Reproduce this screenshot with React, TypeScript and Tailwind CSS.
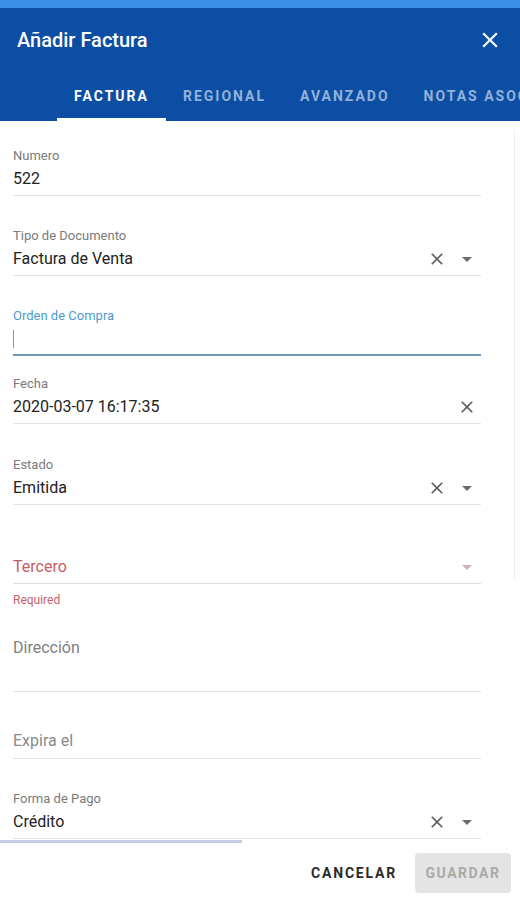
import React from "react";

function CloseIcon({ size = 20, color = "#5f5f5f" }: { size?: number; color?: string }) {
  return (
    <svg width={size} height={size} viewBox="0 0 24 24" fill={color}>
      <path d="M19 6.41L17.59 5 12 10.59 6.41 5 5 6.41 10.59 12 5 17.59 6.41 19 12 13.41 17.59 19 19 17.59 13.41 12z" />
    </svg>
  );
}

function Caret({ color = "#6b6b6b" }: { color?: string }) {
  return (
    <svg width="10" height="5" viewBox="0 0 10 5">
      <polygon points="0,0 10,0 5,5" fill={color} />
    </svg>
  );
}

type FieldProps = {
  label?: string;
  value?: string;
  placeholder?: string;
  clear?: boolean;
  select?: boolean;
  className?: string;
};

function Field({ label, value, placeholder, clear, select, className = "" }: FieldProps) {
  return (
    <div className={"border-b border-[#e3e3e3] " + className}>
      {label ? (
        <div className="text-[13px] leading-[16px] text-[#7a7a7a]">{label}</div>
      ) : (
        <div className="h-[16px]" />
      )}
      <div className="mt-[3px] flex items-center h-[24px]">
        <div
          className={
            "flex-1 text-[16px] leading-[24px] " +
            (value ? "text-[#222]" : "text-[#8a8a8a]")
          }
        >
          {value ?? placeholder}
        </div>
        {clear && select && (
          <div className="flex items-center pr-[9px]">
            <CloseIcon />
            <div className="ml-[15px]">
              <Caret />
            </div>
          </div>
        )}
        {clear && !select && (
          <div className="pr-[4px]">
            <CloseIcon />
          </div>
        )}
      </div>
    </div>
  );
}

export default function App() {
  const tabs = ["FACTURA", "REGIONAL", "AVANZADO", "NOTAS ASOCIADAS"];

  return (
    <div className="w-[520px] h-[900px] bg-white flex flex-col overflow-hidden font-['Roboto','Liberation_Sans',sans-serif]">
      {/* status strip */}
      <div className="h-[8px] bg-[#3d8ee8] shrink-0" />

      {/* Header */}
      <header className="bg-[#0b4ea3] shrink-0">
        <div className="h-[64px] flex items-center justify-between pl-[17px] pr-[17px]">
          <h1 className="text-white text-[20px] font-medium">Añadir Factura</h1>
          <CloseIcon size={26} color="#ffffff" />
        </div>
        <nav className="h-[49px] flex pl-[57px] overflow-hidden">
          {tabs.map((t, i) => (
            <div
              key={t}
              className={
                "relative flex items-center px-[17px] shrink-0 text-[14px] font-bold tracking-[2px] " +
                (i === 0 ? "text-white" : "text-[#93b1d9]")
              }
            >
              {t}
              {i === 0 && (
                <span className="absolute left-0 right-0 bottom-0 h-[3px] bg-white" />
              )}
            </div>
          ))}
        </nav>
      </header>

      {/* Form */}
      <main className="h-[719px] shrink-0 flex overflow-hidden">
        <div className="w-[468px] ml-[13px] shrink-0">
          <Field className="mt-[27px] pb-[4px]" label="Numero" value="522" />
          <Field
            className="mt-[32px] pb-[4px]"
            label="Tipo de Documento"
            value="Factura de Venta"
            clear
            select
          />

          {/* focused field */}
          <div className="mt-[32px] border-b-2 border-[#6d97b8] pb-[3px]">
            <div className="text-[13px] leading-[16px] text-[#4d9bd0]">Orden de Compra</div>
            <div className="mt-[3px] h-[24px] flex items-center">
              <span className="w-[1px] h-[18px] bg-[#7c9bb3]" />
            </div>
          </div>

          <Field className="mt-[20px] pb-[4px]" label="Fecha" value="2020-03-07 16:17:35" clear />
          <Field className="mt-[33px] pb-[4px]" label="Estado" value="Emitida" clear select />

          {/* required select */}
          <div className="mt-[31px] border-b border-[#dedede] pb-[4px]">
            <div className="h-[16px]" />
            <div className="mt-[3px] h-[24px] flex items-center">
              <div className="flex-1 text-[16px] leading-[24px] text-[#c85b63]">Tercero</div>
              <div className="pr-[9px]">
                <Caret color="#c9b5b8" />
              </div>
            </div>
          </div>
          <div className="mt-[8px] text-[12px] leading-[16px] text-[#c8636b]">Required</div>

          {/* textarea */}
          <div className="mt-[9px] h-[75px] border-b border-[#e3e3e3]">
            <div className="pt-[19px] text-[16px] leading-[24px] text-[#7f7f7f]">Dirección</div>
          </div>

          <Field className="mt-[18px] pb-[5px]" placeholder="Expira el" />
          <Field className="mt-[32px] pb-[4px]" label="Forma de Pago" value="Crédito" clear select />
        </div>
        <div className="ml-auto mr-[5px] mt-[9px] w-[1px] h-[450px] bg-[#ededed]" />
      </main>

      {/* progress */}
      <div className="h-[3px] w-[242px] bg-[#cbcbea] shrink-0" />

      {/* Footer */}
      <footer className="flex-1 flex items-center justify-end pr-[9px] pt-[3px] gap-[18px]">
        <button className="text-[14px] font-bold tracking-[1.8px] text-[#2a2a2a]">CANCELAR</button>
        <button className="h-[40px] w-[96px] rounded-[4px] bg-[#e4e4e4] text-[14px] font-bold tracking-[1.5px] text-[#a9a9a9]">
          GUARDAR
        </button>
      </footer>
    </div>
  );
}
